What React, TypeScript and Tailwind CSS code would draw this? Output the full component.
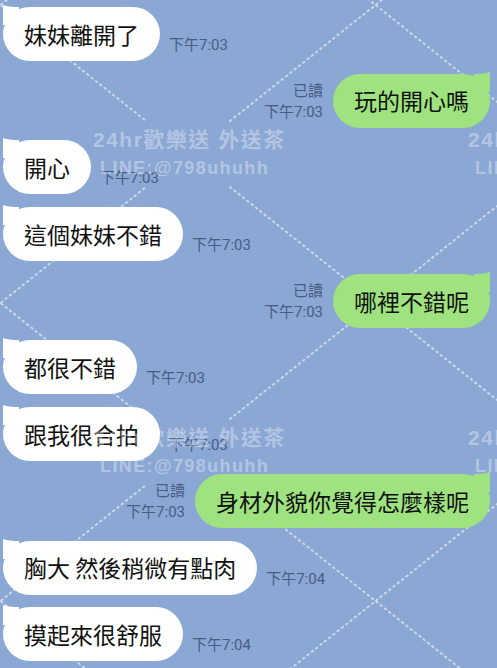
type Msg = { side: "l" | "r"; text: string; time: string }

const messages: Msg[] = [
  { side: "l", text: "妹妹離開了", time: "下午7:03" },
  { side: "r", text: "玩的開心嗎", time: "下午7:03" },
  { side: "l", text: "開心", time: "下午7:03" },
  { side: "l", text: "這個妹妹不錯", time: "下午7:03" },
  { side: "r", text: "哪裡不錯呢", time: "下午7:03" },
  { side: "l", text: "都很不錯", time: "下午7:03" },
  { side: "l", text: "跟我很合拍", time: "下午7:03" },
  { side: "r", text: "身材外貌你覺得怎麼樣呢", time: "下午7:03" },
  { side: "l", text: "胸大 然後稍微有點肉", time: "下午7:04" },
  { side: "l", text: "摸起來很舒服", time: "下午7:04" },
]

// watermark tile: centers every 375 x 298
const centersX = [-187, 188, 563]
const centersY = [-144, 154, 452, 750]

const Lines = () => {
  const segs: [number, number, number, number][] = []
  centersX.forEach((cx) =>
    centersY.forEach((cy) => {
      segs.push([cx + 42, cy + 33, cx + 333, cy + 265])
      segs.push([cx + 42, cy - 33, cx + 333, cy - 265])
    })
  )
  return (
    <svg className="absolute inset-0" width="497" height="668">
      {segs.map((s, i) => (
        <line
          key={i}
          x1={s[0]}
          y1={s[1]}
          x2={s[2]}
          y2={s[3]}
          stroke="#ffffff"
          strokeOpacity="0.55"
          strokeWidth="2"
          strokeDasharray="1.5 4"
          strokeLinecap="round"
        />
      ))}
    </svg>
  )
}

const Watermark = ({ x, y }: { x: number; y: number }) => (
  <>
    <div
      className="absolute whitespace-nowrap font-bold text-white/35 text-[21px] leading-[24px] tracking-[1.5px] font-['Liberation_Sans','Noto_Sans_CJK_TC',sans-serif]"
      style={{ left: x, top: y }}
    >
      24hr歡樂送 外送茶
    </div>
    <div
      className="absolute whitespace-nowrap font-bold text-white/35 text-[18px] leading-[24px] tracking-[1.4px] font-['Liberation_Sans','Noto_Sans_CJK_TC',sans-serif]"
      style={{ left: x + 7, top: y + 28 }}
    >
      LINE:@798uhuhh
    </div>
  </>
)

const Bubble = ({ m }: { m: Msg }) => {
  const green = m.side === "r"
  return (
    <div
      className={`relative h-[54px] flex items-center px-[21px] rounded-[27px] text-[23px] text-[#111] whitespace-pre ${
        green ? "bg-[#9ee380]" : "bg-white"
      }`}
    >
      {green ? (
        <svg className="absolute -top-[2px] right-0" width="16" height="20" viewBox="0 0 16 20">
          <path d="M16 0 C12 1.5 7 2 0 2 L0 20 L16 20 Z" fill="#9ee380" />
        </svg>
      ) : (
        <svg className="absolute -top-[2px] left-0" width="16" height="20" viewBox="0 0 16 20">
          <path d="M0 0 C4 1.5 9 2 16 2 L16 20 L0 20 Z" fill="#ffffff" />
        </svg>
      )}
      <span className="relative">{m.text}</span>
    </div>
  )
}

export default function App() {
  return (
    <div className="relative w-[497px] h-[668px] overflow-hidden bg-[#8ba7d4] font-['Noto_Sans_CJK_TC',sans-serif]">
      <Lines />
      <div className="relative flex flex-col gap-[12.7px] pt-[7px]">
        {messages.map((m, i) =>
          m.side === "l" ? (
            <div key={i} className="flex items-end gap-[9px] pl-[3px]">
              <Bubble m={m} />
              <span className="mb-[5px] text-[15px] leading-[21px] text-[#4a5c84] font-['Roboto','Noto_Sans_CJK_TC',sans-serif]">
                {m.time}
              </span>
            </div>
          ) : (
            <div key={i} className="flex items-end justify-end gap-[10px] pr-[7px]">
              <div className="mb-[5px] flex flex-col items-end text-[15px] leading-[21px] text-[#4a5c84] font-['Roboto','Noto_Sans_CJK_TC',sans-serif]">
                <span>已讀</span>
                <span>{m.time}</span>
              </div>
              <Bubble m={m} />
            </div>
          )
        )}
      </div>
      <Watermark x={93} y={128} />
      <Watermark x={468} y={128} />
      <Watermark x={93} y={426} />
      <Watermark x={468} y={426} />
    </div>
  )
}
